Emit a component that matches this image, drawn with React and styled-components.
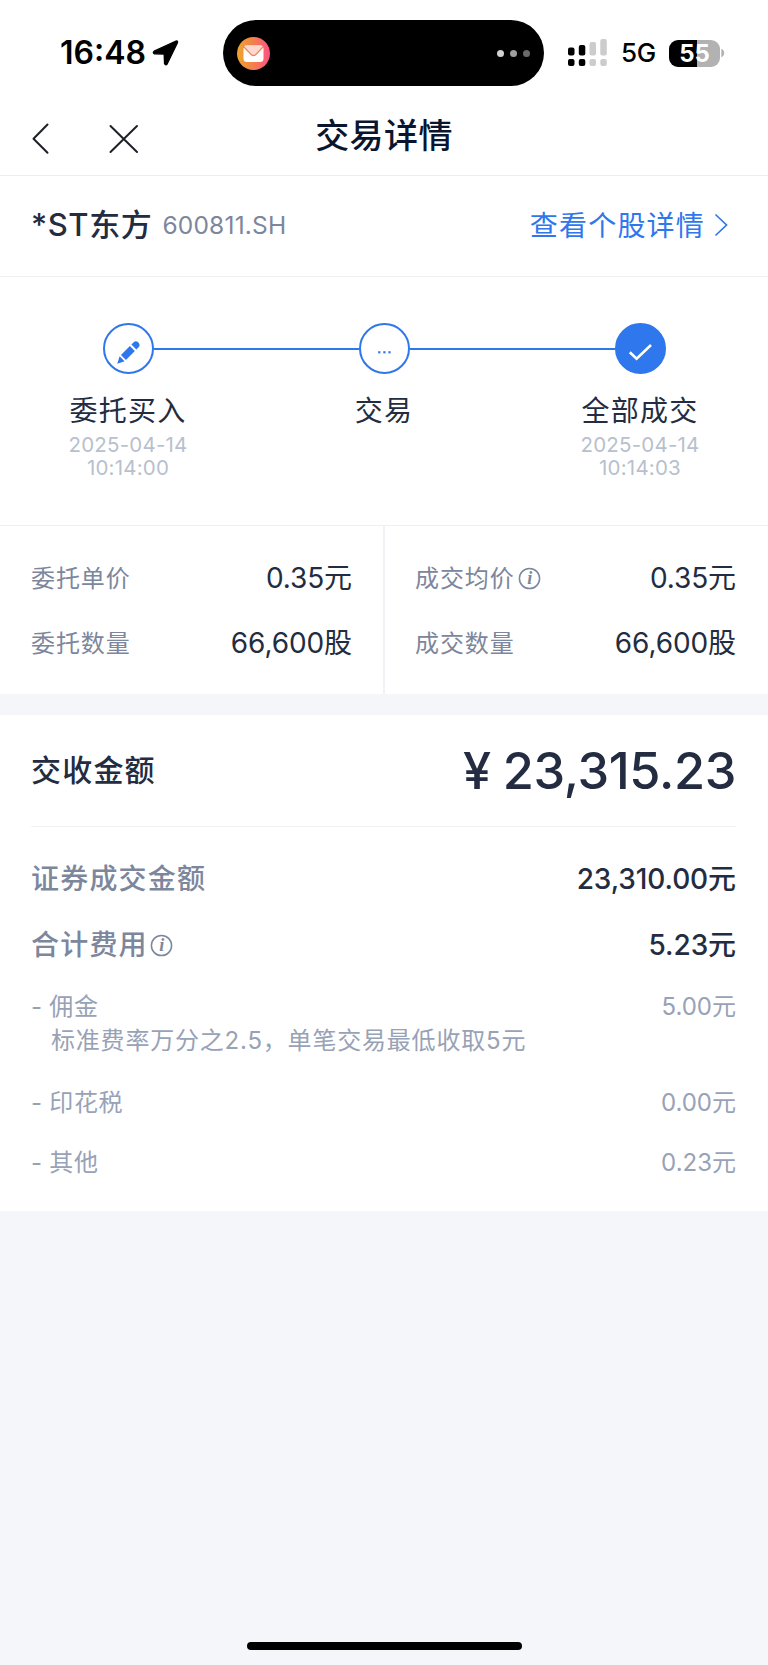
import styled, { createGlobalStyle } from 'styled-components';

const GlobalStyle = createGlobalStyle`
  * {
    box-sizing: border-box;
  }

  body {
    margin: 0;
    background-color: #f4f6fa;
    font-family: Inter, 'Noto Sans CJK SC', sans-serif;
    line-height: 1.25;
    color: #232c40;
  }

  svg {
    flex: none;
  }
`;

const Page = styled.div`
  width: 768px;
  height: 1665px;
  display: flex;
  flex-direction: column;
  overflow: hidden;
`;

const StatusBar = styled.div`
  height: 106px;
  padding: 20px 43px 20px 60px;
  display: flex;
  align-items: center;
  background-color: #fff;
`;

const Clock = styled.div`
  width: 92px;
  color: #000;
  font-size: 32px;
  font-weight: 600;
  line-height: 40px;
  white-space: nowrap;
`;

const Island = styled.div`
  width: 321px;
  height: 66px;
  margin: 0 24px 0 44px;
  padding: 0 14px;
  display: flex;
  align-items: center;
  justify-content: space-between;
  background-color: #000;
  border-radius: 33px;
`;

const Dots = styled.div`
  display: flex;
  gap: 6px;
`;

const Dot = styled.span`
  width: 7px;
  height: 7px;
  border-radius: 50%;
  background-color: ${(props) => props.$color};
`;

const Network = styled.div`
  width: 48px;
  color: #000;
  font-size: 26px;
  font-weight: 500;
  letter-spacing: -0.3px;
  line-height: 32px;
`;

const Battery = styled.div`
  width: 51px;
  height: 27px;
  border-radius: 9px;
  background: linear-gradient(to right, #000 55%, #b2b2b2 55%);
  color: #fff;
  font-size: 24px;
  font-weight: 700;
  line-height: 28px;
  text-align: center;
`;

const NavBar = styled.div`
  height: 70px;
  padding: 0 30px;
  display: grid;
  grid-template-columns: 1fr auto 1fr;
  border-bottom: 1px solid #ecedf3;
  background-color: #fff;
`;

const NavIcons = styled.div`
  padding-top: 16px;
  display: flex;
  gap: 56px;
`;

const Title = styled.h1`
  margin: 0;
  padding-top: 10px;
  color: #0a1530;
  font-size: 34px;
  font-weight: 500;
  letter-spacing: 0.4px;
  line-height: 40px;
`;

const StockRow = styled.div`
  height: 101px;
  padding: 0 40px 2px 31px;
  display: flex;
  align-items: center;
  border-bottom: 1px solid #efeff2;
  background-color: #fff;
`;

const StockName = styled.div`
  font-size: 31px;
  font-weight: 500;
  letter-spacing: 0.6px;
`;

const StockCode = styled.div`
  margin-left: 10px;
  color: #7c869c;
  font-size: 24.5px;
  letter-spacing: 0.2px;
`;

const StockLink = styled.a`
  margin-left: auto;
  display: flex;
  align-items: center;
  gap: 10px;
  color: #2e77ec;
  font-size: 28px;
  letter-spacing: 1.2px;

  span {
    padding-top: 3px;
  }
`;

const Steps = styled.div`
  height: 249px;
  padding-top: 46px;
  display: grid;
  grid-template-columns: repeat(3, 1fr);
  border-bottom: 1px solid #efeff2;
  background-color: #fff;
`;

const Step = styled.div`
  display: flex;
  flex-direction: column;
  align-items: center;
`;

const StepTrack = styled.div`
  width: 100%;
  display: flex;
  align-items: center;
`;

const StepLine = styled.div`
  flex: 1;
  height: 2px;
  background-color: ${(props) => (props.$hidden ? 'transparent' : '#2e77ec')};
`;

const StepCircle = styled.div`
  width: 51px;
  height: 51px;
  display: flex;
  align-items: center;
  justify-content: center;
  border: 2px solid #2e77ec;
  border-radius: 50%;
  background-color: ${(props) => (props.$done ? '#2e77ec' : '#fff')};
`;

const StepName = styled.div`
  margin-top: 19px;
  font-size: 28px;
  letter-spacing: 1.2px;
  line-height: 36px;
`;

const StepTime = styled.div`
  margin-top: 4px;
  color: #b8bfce;
  font-size: 20.5px;
  letter-spacing: 0.2px;
  line-height: 23px;
  text-align: center;
`;

const Quotes = styled.div`
  height: 168px;
  display: grid;
  grid-template-columns: 1fr 1fr;
  background-color: #fff;
`;

const QuoteColumn = styled.div`
  padding: 20px 32px 0 31px;

  & + & {
    padding-left: 30px;
    border-left: 1px solid #f1f2f6;
  }

  &:first-child {
    padding-right: 31px;
    border-right: 1px solid #f1f2f6;
  }
`;

const Row = styled.div`
  height: ${(props) => props.$height}px;
  display: flex;
  align-items: center;
  justify-content: space-between;
`;

const Label = styled.div`
  display: flex;
  align-items: center;
  gap: 3px;
  color: #7c869c;
  font-size: 24px;
  letter-spacing: 0.9px;
`;

const Value = styled.div`
  font-size: 28px;
  letter-spacing: -0.1px;
`;

const Settlement = styled.div`
  height: 496px;
  margin-top: 21px;
  padding: 0 32px 0 31px;
  background-color: #fff;
`;

const Total = styled.div`
  height: 112px;
  display: flex;
  align-items: center;
  justify-content: space-between;
  border-bottom: 1px solid #f1f2f5;
`;

const TotalLabel = styled.div`
  font-size: 30px;
  font-weight: 500;
  letter-spacing: 1.2px;
`;

const TotalValue = styled.div`
  font-size: 50.5px;
  font-weight: 500;
  letter-spacing: -0.35px;
  word-spacing: -1px;
`;

const FeeList = styled.div`
  padding-top: 19px;
`;

const StrongLabel = styled(Label)`
  gap: 2px;
  font-size: 28px;
  font-weight: 500;
  letter-spacing: 1.2px;
`;

const StrongValue = styled(Value)`
  font-weight: 500;
`;

const SubRow = styled(Row)`
  padding-top: ${(props) => props.$offset || 0}px;
  color: #98a2b6;
  font-size: 24px;
`;

const SubLabel = styled.span`
  letter-spacing: 0.7px;
  word-spacing: -1px;
`;

const Note = styled.div`
  height: 33px;
  padding-left: 20px;
  color: #98a2b6;
  font-size: 24px;
  letter-spacing: 0.8px;
  line-height: 33px;
  white-space: nowrap;
`;

const HomeBar = styled.div`
  width: 275px;
  height: 8px;
  margin: auto auto 15px;
  border-radius: 4px;
  background-color: #000;
`;

const LocationIcon = () => (
  <svg width="27" height="26" viewBox="0 0 27 26">
    <path
      d="M24 1.2 2.2 11.2Q.4 12.6 2.4 13.8L12.2 14 12.6 23.6Q13.8 25.8 15.2 23.8L25.4 2.8Q26 .6 24 1.2Z"
      stroke="#000"
      strokeWidth="1.4"
      strokeLinejoin="round"
    />
  </svg>
);

const MailIcon = () => (
  <svg width="33" height="33" viewBox="0 0 33 33">
    <defs>
      <linearGradient id="mail" x1="0" x2="1" y1="0" y2="0">
        <stop offset="0" stopColor="#eea52c" />
        <stop offset="0.5" stopColor="#f47f4c" />
        <stop offset="1" stopColor="#ff4f86" />
      </linearGradient>
    </defs>
    <circle cx="16.5" cy="16.5" r="16.5" fill="url(#mail)" />
    <rect x="6.5" y="8.5" width="20" height="16.5" rx="3.5" fill="#fff" />
    <path d="M8 8.5h17l1 1.5-7.6 7.6q-1.9 1.7-3.8 0L7 10Z" fill="#fdd8d0" />
    <path
      d="M6.5 9.5l8 8.3q2 1.8 4 0l8-8.3"
      fill="none"
      stroke="#f47f4c"
      strokeWidth="1.2"
    />
  </svg>
);

const SignalIcon = () => (
  <svg width="53" height="28" viewBox="0 0 53 28">
    <g fill="#000">
      <rect x="0" y="8.5" width="6.5" height="8" rx="2" />
      <rect x="10.8" y="6" width="6.5" height="10.5" rx="2" />
      <rect x="0" y="20" width="6.5" height="7" rx="2" />
      <rect x="10.8" y="20" width="6.5" height="7" rx="2" />
    </g>
    <g fill="#ccc">
      <rect x="21.5" y="3" width="6.5" height="13.5" rx="2" />
      <rect x="32.3" y="0" width="6.5" height="16.5" rx="2" />
      <rect x="21.5" y="20" width="6.5" height="7" rx="2" />
      <rect x="32.3" y="20" width="6.5" height="7" rx="2" />
    </g>
  </svg>
);

const BatteryTip = () => (
  <svg width="5" height="10" viewBox="0 0 5 10">
    <path d="M1.3.8Q4.2 2 4.2 5T1.3 9.2Z" fill="#b2b2b2" />
  </svg>
);

const BackIcon = () => (
  <svg width="20" height="33" viewBox="0 0 20 33">
    <path
      d="M17.5 2.5 3.5 16.7 17.5 30.8"
      fill="none"
      stroke="#1d2027"
      strokeWidth="2"
      strokeLinecap="round"
      strokeLinejoin="round"
    />
  </svg>
);

const CloseIcon = () => (
  <svg width="34" height="34" viewBox="0 0 34 34">
    <path
      d="M4.5 4 31 30M31 4 4.5 30"
      stroke="#1d2027"
      strokeWidth="2"
      strokeLinecap="round"
    />
  </svg>
);

const ArrowIcon = () => (
  <svg width="13" height="24" viewBox="0 0 13 24">
    <path
      d="M1 2 11.5 12 1 22"
      fill="none"
      stroke="#2e77ec"
      strokeWidth="1.7"
      strokeLinecap="round"
    />
  </svg>
);

const PencilIcon = () => (
  <svg width="51" height="51" viewBox="0 0 51 51">
    <g transform="translate(25.4 29.5) rotate(-45)" fill="#2e77ec">
      <path d="M-15.8 0-8.9-3.5V3.5Z" />
      <rect x="-7" y="-3.5" width="12.6" height="7" />
      <path d="M7.7-3.5H10.6A3.5 3.5 0 0 1 10.6 3.5H7.7Z" />
    </g>
  </svg>
);

const EllipsisIcon = () => (
  <svg width="51" height="51" viewBox="0 0 51 51">
    <g fill="#2e77ec">
      <rect x="19.2" y="28.2" width="2.2" height="2.2" />
      <rect x="24.3" y="28.2" width="2.2" height="2.2" />
      <rect x="29.4" y="28.2" width="2.2" height="2.2" />
    </g>
  </svg>
);

const CheckIcon = () => (
  <svg width="51" height="51" viewBox="0 0 51 51">
    <path
      d="M14.8 29.2 21.6 35.6 36 22"
      fill="none"
      stroke="#fff"
      strokeWidth="2.6"
    />
  </svg>
);

const InfoIcon = () => (
  <svg width="23" height="23" viewBox="0 0 23 23">
    <circle cx="11.5" cy="11.5" r="10.1" fill="none" stroke="#7c869c" strokeWidth="1.5" />
    <text
      x="11.7"
      y="17.4"
      fill="#7c869c"
      fontFamily="'Liberation Serif', serif"
      fontSize="18"
      fontStyle="italic"
      fontWeight="700"
      letterSpacing="0"
      textAnchor="middle"
    >
      i
    </text>
  </svg>
);

const steps = [
  { name: '委托买入', date: '2025-04-14', time: '10:14:00', icon: <PencilIcon /> },
  { name: '交易', icon: <EllipsisIcon /> },
  {
    name: '全部成交',
    date: '2025-04-14',
    time: '10:14:03',
    icon: <CheckIcon />,
    done: true,
  },
];

const App = () => {
  return (
    <>
      <GlobalStyle />
      <Page>
        <StatusBar>
          <Clock>16:48</Clock>
          <LocationIcon />
          <Island>
            <MailIcon />
            <Dots>
              <Dot $color="#d2d2d2" />
              <Dot $color="#a0a0a0" />
              <Dot $color="#6a6a6a" />
            </Dots>
          </Island>
          <SignalIcon />
          <Network>5G</Network>
          <Battery>55</Battery>
          <BatteryTip />
        </StatusBar>

        <NavBar>
          <NavIcons>
            <BackIcon />
            <CloseIcon />
          </NavIcons>
          <Title>交易详情</Title>
        </NavBar>

        <StockRow>
          <StockName>*ST东方</StockName>
          <StockCode>600811.SH</StockCode>
          <StockLink>
            <span>查看个股详情</span>
            <ArrowIcon />
          </StockLink>
        </StockRow>

        <Steps>
          {steps.map((step, index) => (
            <Step key={step.name}>
              <StepTrack>
                <StepLine $hidden={index === 0} />
                <StepCircle $done={step.done}>{step.icon}</StepCircle>
                <StepLine $hidden={index === steps.length - 1} />
              </StepTrack>
              <StepName>{step.name}</StepName>
              {step.date && (
                <StepTime>
                  {step.date}
                  <br />
                  {step.time}
                </StepTime>
              )}
            </Step>
          ))}
        </Steps>

        <Quotes>
          <QuoteColumn>
            <Row $height={65}>
              <Label>委托单价</Label>
              <Value>0.35元</Value>
            </Row>
            <Row $height={65}>
              <Label>委托数量</Label>
              <Value>66,600股</Value>
            </Row>
          </QuoteColumn>
          <QuoteColumn>
            <Row $height={65}>
              <Label>
                成交均价
                <InfoIcon />
              </Label>
              <Value>0.35元</Value>
            </Row>
            <Row $height={65}>
              <Label>成交数量</Label>
              <Value>66,600股</Value>
            </Row>
          </QuoteColumn>
        </Quotes>

        <Settlement>
          <Total>
            <TotalLabel>交收金额</TotalLabel>
            <TotalValue>¥ 23,315.23</TotalValue>
          </Total>
          <FeeList>
            <Row $height={66}>
              <StrongLabel>证券成交金额</StrongLabel>
              <StrongValue>23,310.00元</StrongValue>
            </Row>
            <Row $height={66}>
              <StrongLabel>
                合计费用
                <InfoIcon />
              </StrongLabel>
              <StrongValue>5.23元</StrongValue>
            </Row>
            <SubRow $height={46} $offset={12}>
              <SubLabel>- 佣金</SubLabel>
              <span>5.00元</span>
            </SubRow>
            <Note>标准费率万分之2.5，单笔交易最低收取5元</Note>
            <SubRow $height={92}>
              <SubLabel>- 印花税</SubLabel>
              <span>0.00元</span>
            </SubRow>
            <SubRow $height={28}>
              <SubLabel>- 其他</SubLabel>
              <span>0.23元</span>
            </SubRow>
          </FeeList>
        </Settlement>

        <HomeBar />
      </Page>
    </>
  );
};

export default App;
